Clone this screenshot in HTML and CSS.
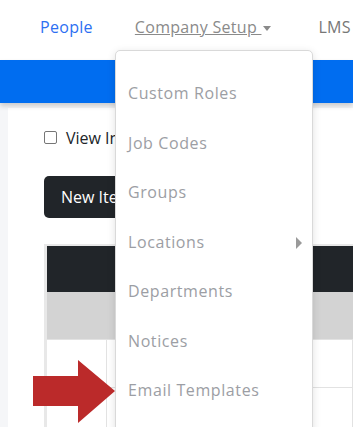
FILE: index.html
```html
<!DOCTYPE html>
<html lang="en">
<head>
    <meta charset="UTF-8">
    <meta name="viewport" content="width=device-width, initial-scale=1.0">
    <title>Company Setup</title>
    <link rel="stylesheet" href="styles.css">
</head>
<body>
    <nav class="topnav">
        <a class="nav-link people" href="#">People</a>
        <a class="nav-link setup" href="#">Company Setup <span class="caret"></span></a>
        <a class="nav-link lms" href="#">LMS</a>
    </nav>
    <div class="bluebar"></div>

    <div class="page">
        <div class="card">
            <label class="check">
                <span class="box"></span>
                View Inactive
            </label>
            <button class="new-btn">New Item</button>

            <table class="grid">
                <tr class="head"><th></th><th></th><th></th><th></th></tr>
                <tr class="filter"><td></td><td></td><td></td><td></td></tr>
                <tr><td></td><td></td><td></td><td></td></tr>
                <tr><td></td><td></td><td></td><td></td></tr>
            </table>
        </div>
    </div>

    <!-- dropdown menu open over the page -->
    <ul class="dropdown">
        <li>Custom Roles</li>
        <li>Job Codes</li>
        <li>Groups</li>
        <li class="sub">Locations <span class="sub-caret"></span></li>
        <li>Departments</li>
        <li>Notices</li>
        <li>Email Templates</li>
    </ul>

    <svg class="arrow" width="82" height="64" viewBox="0 0 82 64">
        <polygon points="0,16 45,16 45,0 82,31 45,63 45,46 0,46" fill="#bb2a2a"/>
    </svg>
</body>
</html>
```

FILE: styles.css
```css
body {
    margin: 0;
    font-family: 'Open Sans', 'Noto Sans', sans-serif;
    background: #f5f6f8;
    overflow: hidden;
    height: 427px;
    position: relative;
}

.topnav {
    height: 60px;
    background: #fff;
    display: flex;
    align-items: center;
    padding-left: 40px;
    box-sizing: border-box;
    padding-bottom: 6px;
    overflow: hidden;
}

.nav-link {
    font-size: 16px;
    letter-spacing: 0.3px;
    text-decoration: none;
    white-space: nowrap;
}

.people {
    color: #2d6ff2;
}

.setup {
    color: #8a8a8a;
    text-decoration: underline;
    margin-left: 42px;
}

.caret {
    display: inline-block;
    width: 0;
    height: 0;
    border-left: 4px solid transparent;
    border-right: 4px solid transparent;
    border-top: 5px solid #8a8a8a;
    vertical-align: middle;
    margin-left: 2px;
}

.lms {
    color: #777;
    margin-left: 47px;
}

.bluebar {
    height: 43px;
    background: #006df0;
    box-shadow: 0 3px 5px rgba(0, 0, 0, 0.18);
    position: relative;
}

.page {
    padding-left: 8px;
    padding-top: 5px;
    height: 319px;
    overflow: hidden;
}

.card {
    background: #fff;
    padding: 23px 0 0 36px;
    height: 400px;
    overflow: hidden;
}

.check {
    display: flex;
    align-items: center;
    font-size: 16px;
    color: #212529;
    height: 13px;
    white-space: nowrap;
}

.box {
    width: 11px;
    height: 11px;
    border: 1px solid #767676;
    border-radius: 2px;
    margin-right: 9px;
}

.new-btn {
    display: block;
    margin-top: 32px;
    height: 42px;
    padding: 0 17px;
    background: #212529;
    color: #fff;
    border: none;
    border-radius: 5px;
    font-family: inherit;
    font-size: 16px;
}

.grid {
    margin-top: 26px;
    border-collapse: collapse;
    border-top: 2px solid #e8e8e8;
    border-left: 3px solid #e8e8e8;
}

.grid td, .grid th {
    padding: 0;
    border: 1px solid #e2e2e2;
}

.grid tr td:nth-child(1), .grid tr th:nth-child(1) { width: 82px; }
.grid tr td:nth-child(2), .grid tr th:nth-child(2) { width: 107px; }
.grid tr td:nth-child(3), .grid tr th:nth-child(3) { width: 109px; }
.grid tr td:nth-child(4), .grid tr th:nth-child(4) { width: 120px; }

.head th {
    background: #212529;
    height: 46px;
    border: none;
}

.filter td {
    background: #d3d3d3;
    height: 68px;
    border: none;
}

.grid tr td {
    height: 47px;
}

.dropdown {
    position: absolute;
    left: 115px;
    top: 50px;
    width: 196px;
    height: 370px;
    margin: 0;
    padding: 18px 0 0;
    list-style: none;
    background: #fff;
    border: 1px solid #d9d9d9;
    border-radius: 5px;
    box-shadow: 0 2px 8px rgba(0, 0, 0, 0.12);
    box-sizing: content-box;
}

.dropdown li {
    height: 49.5px;
    line-height: 49.5px;
    padding-left: 12px;
    font-size: 16px;
    letter-spacing: 0.6px;
    color: #9c9ea4;
    white-space: nowrap;
    position: relative;
}

.sub-caret {
    position: absolute;
    right: 10px;
    top: 19px;
    width: 0;
    height: 0;
    border-top: 6px solid transparent;
    border-bottom: 6px solid transparent;
    border-left: 6px solid #9a9a9a;
}

.arrow {
    position: absolute;
    left: 33px;
    top: 360px;
}
```
